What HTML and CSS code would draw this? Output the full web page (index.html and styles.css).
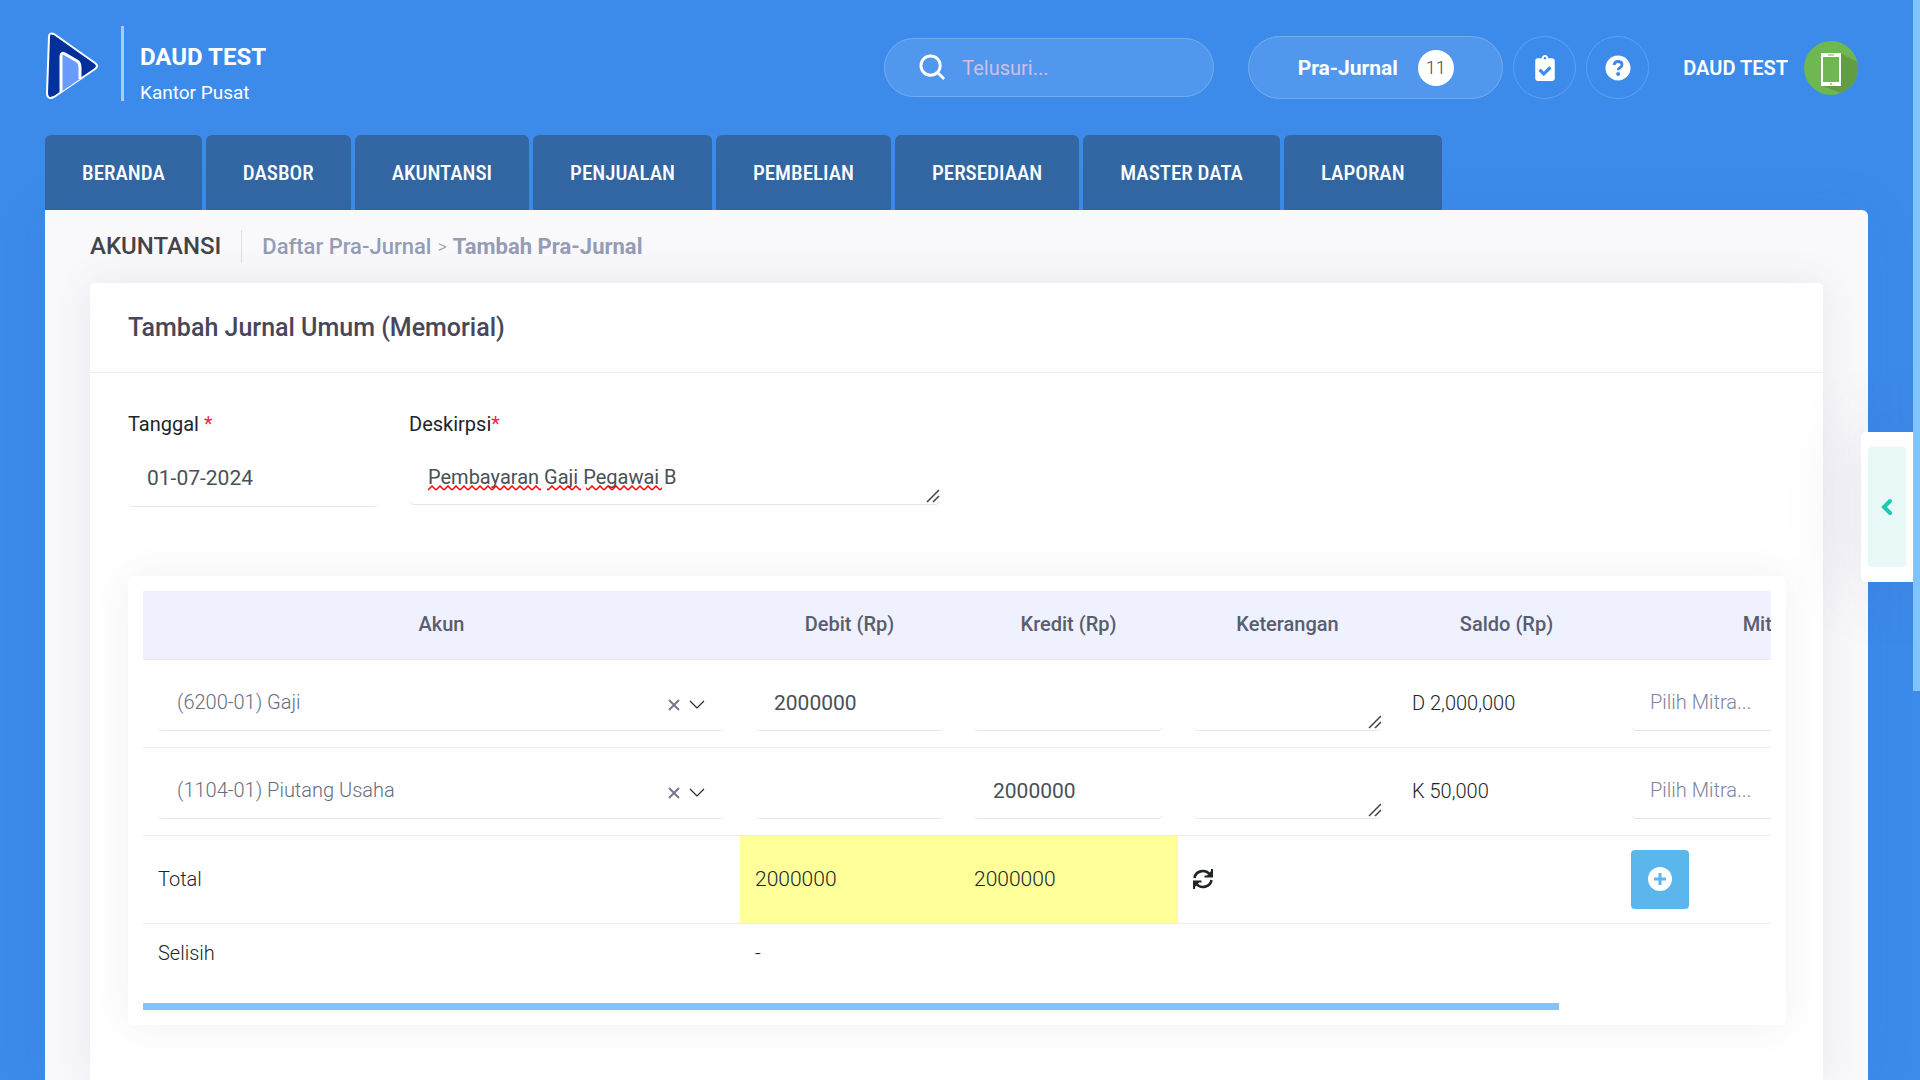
FILE: index.html
```html
<!DOCTYPE html>
<html lang="id">

<head>
    <meta charset="UTF-8">
    <meta name="viewport" content="width=device-width, initial-scale=1.0">
    <title>Tambah Pra-Jurnal</title>
    <link rel="stylesheet" href="styles.css">
</head>

<body>

    <header class="topbar">
        <a class="logo" href="#" aria-label="Beranda">
            <svg width="54" height="68" viewBox="0 0 54 68">
                <path d="M4 5 Q4 0 9 2 L50 31 Q54 34 50 37 L9 65 Q2 68 2 61 Z" fill="#00309b" stroke="#fff" stroke-width="2" stroke-linejoin="round" />
                <path d="M16 60 V24 Q16 20 20 22 L32 29 Q35 31 35 35 V47 Z" fill="#6a9bff" />
                <path d="M16 60 V24 Q16 20 20 22 L32 29 Q35 31 35 35 V47" fill="none" stroke="#fff" stroke-width="3" />
            </svg>
        </a>
        <div class="company">
            <strong>DAUD TEST</strong>
            <span>Kantor Pusat</span>
        </div>

        <form class="search">
            <svg width="27" height="27" viewBox="0 0 28 28" fill="none" stroke="#fff" stroke-width="3">
                <circle cx="12" cy="12" r="10" />
                <path d="M19 19 L26 26" />
            </svg>
            <input type="search" placeholder="Telusuri..." aria-label="Telusuri">
        </form>

        <button class="prejournal" type="button">Pra-Jurnal <span class="badge">11</span></button>

        <button class="round" type="button" aria-label="Tugas">
            <svg width="20" height="26" viewBox="0 0 384 512" fill="#fff">
                <path d="M336 64h-80c0-35.300-28.700-64-64-64s-64 28.700-64 64H48C21.500 64 0 85.500 0 112v352c0 26.500 21.500 48 48 48h288c26.500 0 48-21.500 48-48V112c0-26.500-21.500-48-48-48zM192 40c13.300 0 24 10.700 24 24s-10.700 24-24 24-24-10.700-24-24 10.700-24 24-24zm121 234L176 410c-5 5-12 5-17 0l-88-89c-5-5-5-12 0-17l28-28c5-5 12-5 17 0l52 52 100-100c5-5 12-5 17 0l28 29c5 5 5 12 0 17z" />
            </svg>
        </button>
        <button class="round" type="button" aria-label="Bantuan">
            <svg width="26" height="26" viewBox="0 0 26 26">
                <circle cx="13" cy="13" r="12.500" fill="#fff" />
                <path d="M9 10 Q9.500 6.500 13 6.500 Q17 6.500 17 9.700 Q17 11.500 14.800 12.700 Q13.200 13.600 13.200 15.300" fill="none" stroke="#3c8bea" stroke-width="2.800" />
                <circle cx="13.100" cy="19" r="2" fill="#3c8bea" />
            </svg>
        </button>

        <a class="user" href="#">
            DAUD TEST
            <svg width="54" height="54" viewBox="0 0 54 54">
                <defs>
                    <clipPath id="avatar"><circle cx="27" cy="27" r="27" /></clipPath>
                </defs>
                <circle cx="27" cy="27" r="27" fill="#6fb751" />
                <path d="M36 12 L54 21 V54 H42 L18 45 Z" fill="#629c43" clip-path="url(#avatar)" />
                <path d="M17 12 H37 V45 H17 Z" fill="#fff" />
                <path d="M19 16 H35 V41 H19 Z" fill="#6fb751" />
                <path d="M24 14 H30" stroke="#6fb751" />
                <path d="M27 42 V44" stroke="#629c43" />
            </svg>
        </a>
    </header>

    <nav class="tabs">
        <a href="#">BERANDA</a>
        <a href="#">DASBOR</a>
        <a href="#">AKUNTANSI</a>
        <a href="#">PENJUALAN</a>
        <a href="#">PEMBELIAN</a>
        <a href="#">PERSEDIAAN</a>
        <a href="#">MASTER DATA</a>
        <a href="#">LAPORAN</a>
    </nav>

    <main class="content">
        <div class="subheader">
            <h1>AKUNTANSI</h1>
            <div class="crumbs">
                <a href="#">Daftar Pra-Jurnal</a>
                <span>&gt;</span>
                <a class="current" href="#">Tambah Pra-Jurnal</a>
            </div>
        </div>

        <section class="card">
            <div class="card-head">
                <h2>Tambah Jurnal Umum (Memorial)</h2>
            </div>

            <div class="card-body">
                <div class="fields">
                    <div class="field date">
                        <label for="tanggal">Tanggal <span class="req">*</span></label>
                        <input class="control amount" type="text" id="tanggal" value="01-07-2024">
                    </div>
                    <div class="field desc">
                        <label for="deskripsi">Deskirpsi<span class="req">*</span></label>
                        <textarea class="control" id="deskripsi" rows="1" spellcheck="false">Pembayaran Gaji Pegawai B</textarea>
                        <svg class="squiggle" width="236" height="6">
                            <defs>
                                <pattern id="wave" width="8" height="6" patternUnits="userSpaceOnUse">
                                    <path d="M0 5 L4 1 L8 5" fill="none" stroke="#f00" stroke-width="1.500" />
                                </pattern>
                            </defs>
                            <rect width="113" height="6" fill="url(#wave)" />
                            <rect x="119" width="34" height="6" fill="url(#wave)" />
                            <rect x="158" width="76" height="6" fill="url(#wave)" />
                        </svg>
                    </div>
                </div>

                <div class="table-card">
                    <div class="table-wrap">
                        <table>
                            <colgroup>
                                <col class="col-akun">
                                <col class="col-std">
                                <col class="col-std">
                                <col class="col-std">
                                <col class="col-std">
                                <col class="col-mitra">
                                <col class="col-aksi">
                            </colgroup>
                            <thead>
                                <tr>
                                    <th>Akun</th>
                                    <th>Debit (Rp)</th>
                                    <th>Kredit (Rp)</th>
                                    <th>Keterangan</th>
                                    <th>Saldo (Rp)</th>
                                    <th>Mitra</th>
                                    <th></th>
                                </tr>
                            </thead>
                            <tbody>
                                <tr>
                                    <td>
                                        <div class="picker">
                                            <select class="control" aria-label="Akun">
                                                <option>(6200-01) Gaji</option>
                                            </select>
                                            <button class="clear" type="button" aria-label="Hapus">
                                                <svg width="12" height="12" viewBox="0 0 12 12"><path d="M1 1 L11 11 M11 1 L1 11" /></svg>
                                            </button>
                                            <svg class="arrow" width="16" height="10" viewBox="0 0 16 10"><path d="M1 1 L8 8 L15 1" /></svg>
                                        </div>
                                    </td>
                                    <td><input class="control amount" type="text" value="2000000" aria-label="Debit"></td>
                                    <td><input class="control amount" type="text" aria-label="Kredit"></td>
                                    <td><textarea class="control" rows="1" aria-label="Keterangan"></textarea></td>
                                    <td>D 2,000,000</td>
                                    <td>
                                        <select class="control placeholder" aria-label="Mitra">
                                            <option>Pilih Mitra...</option>
                                        </select>
                                    </td>
                                    <td></td>
                                </tr>
                                <tr>
                                    <td>
                                        <div class="picker">
                                            <select class="control" aria-label="Akun">
                                                <option>(1104-01) Piutang Usaha</option>
                                            </select>
                                            <button class="clear" type="button" aria-label="Hapus">
                                                <svg width="12" height="12" viewBox="0 0 12 12"><path d="M1 1 L11 11 M11 1 L1 11" /></svg>
                                            </button>
                                            <svg class="arrow" width="16" height="10" viewBox="0 0 16 10"><path d="M1 1 L8 8 L15 1" /></svg>
                                        </div>
                                    </td>
                                    <td><input class="control amount" type="text" aria-label="Debit"></td>
                                    <td><input class="control amount" type="text" value="2000000" aria-label="Kredit"></td>
                                    <td><textarea class="control" rows="1" aria-label="Keterangan"></textarea></td>
                                    <td>K 50,000</td>
                                    <td>
                                        <select class="control placeholder" aria-label="Mitra">
                                            <option>Pilih Mitra...</option>
                                        </select>
                                    </td>
                                    <td></td>
                                </tr>
                                <tr>
                                    <td>Total</td>
                                    <td class="sum">2000000</td>
                                    <td class="sum">2000000</td>
                                    <td>
                                        <button class="refresh" type="button" aria-label="Hitung ulang">
                                            <svg width="20" height="20" viewBox="0 0 20 20">
                                                <path d="M1.500 9 A8.500 8 0 0 1 16.500 5 M18.500 11 A8.500 8 0 0 1 3.500 15" fill="none" stroke="#212529" stroke-width="2.600" />
                                                <path d="M20 0 V8.500 H11.500 V6.500 H14 L18 2 V0 Z M0 20 V11.500 H8.500 V13.500 H6 L2 18 V20 Z" fill="#212529" />
                                            </svg>
                                        </button>
                                    </td>
                                    <td></td>
                                    <td>
                                        <button class="add" type="button" aria-label="Tambah baris">
                                            <svg width="24" height="24" viewBox="0 0 24 24">
                                                <circle cx="12" cy="12" r="12" fill="#fff" />
                                                <path d="M12 6 V18 M6 12 H18" stroke="#5ab6eb" stroke-width="3" />
                                            </svg>
                                        </button>
                                    </td>
                                    <td></td>
                                </tr>
                                <tr class="diff">
                                    <td>Selisih</td>
                                    <td>-</td>
                                    <td></td>
                                    <td></td>
                                    <td></td>
                                    <td></td>
                                    <td></td>
                                </tr>
                            </tbody>
                        </table>
                    </div>
                    <div class="scroll-x"></div>
                </div>
            </div>
        </section>
    </main>

    <aside class="drawer">
        <button type="button" aria-label="Buka panel">
            <svg width="12" height="18" viewBox="0 0 12 18"><path d="M9 3 L3 9 L9 15" /></svg>
        </button>
    </aside>
    <div class="scroll-y"></div>

</body>

</html>
```

FILE: styles.css
```css
* {
    margin: 0;
    padding: 0;
    box-sizing: border-box;
}

body {
    display: flex;
    flex-direction: column;
    height: 100vh;
    padding: 0 52px 0 45px;
    overflow: hidden;
    background: #3c8bea;
    color: #212529;
    font-family: Roboto, "Liberation Sans", sans-serif;
    font-size: 20px;
    line-height: 30px;
}

a {
    color: inherit;
    text-decoration: none;
}

button,
input,
select,
textarea {
    font: inherit;
    color: inherit;
    border: 0;
    outline: 0;
    background: none;
}

svg {
    display: block;
    flex: none;
}

/* header */
.topbar {
    display: flex;
    align-items: center;
    height: 135px;
    flex: none;
    color: #fff;
}

.logo {
    margin-bottom: 4px;
}

.company {
    display: flex;
    flex-direction: column;
    justify-content: flex-end;
    gap: 13px;
    height: 75px;
    margin: 0 auto 8px 22px;
    padding-left: 16px;
    border-left: 3px solid #a5cbf8;
}

.company strong {
    font-size: 24px;
    font-weight: 700;
}

.company span {
    font-size: 19px;
    line-height: 16px;
}

.search {
    display: flex;
    align-items: center;
    gap: 16px;
    width: 330px;
    height: 59px;
    margin-right: 34px;
    padding: 0 34px;
    border: 1px solid #75adf1;
    border-radius: 30px;
    background: #5097ed;
}

.search input {
    width: 100%;
}

.search input::placeholder {
    color: #d3bfe0;
}

.prejournal {
    display: flex;
    align-items: center;
    justify-content: center;
    gap: 20px;
    width: 255px;
    height: 63px;
    border: 1px solid #75adf1;
    border-radius: 32px;
    background: #5097ed;
    font-size: 21px;
    font-weight: 700;
}

.badge {
    width: 36px;
    height: 36px;
    border-radius: 50%;
    background: #fff;
    color: #45454d;
    font-size: 18px;
    font-weight: 300;
    line-height: 36px;
}

.round {
    display: flex;
    align-items: center;
    justify-content: center;
    width: 63px;
    height: 63px;
    margin-left: 10px;
    border: 1px solid #629fef;
    border-radius: 50%;
}

.user {
    display: flex;
    align-items: center;
    gap: 16px;
    margin: 0 10px 0 34px;
    font-weight: 600;
}

/* menu */
.tabs {
    display: flex;
    gap: 4px;
    flex: none;
}

.tabs a {
    height: 75px;
    padding: 0 37px;
    border-radius: 6px 6px 0 0;
    background: #3267a3;
    color: #fff;
    font-family: "Roboto Condensed", "Liberation Sans Narrow", "Liberation Sans", sans-serif;
    font-size: 21px;
    font-weight: 500;
    line-height: 76px;
}

/* page */
.content {
    display: flex;
    flex-direction: column;
    flex: 1;
    padding: 0 45px;
    border-radius: 0 6px 0 0;
    background: #f9f9fc;
    box-shadow: 0 0 50px rgba(40, 90, 200, 0.1);
}

.subheader {
    display: flex;
    align-items: center;
    height: 73px;
    flex: none;
}

.subheader h1 {
    padding-right: 20px;
    border-right: 1px solid #dcdde6;
    color: #434349;
    font-size: 24px;
    font-weight: 500;
    line-height: 33px;
}

.crumbs {
    display: flex;
    gap: 6px;
    padding-left: 20px;
    color: #959cb6;
    font-size: 22px;
    font-weight: 500;
}

.crumbs span {
    font-size: 18px;
    font-weight: 300;
}

.crumbs .current {
    font-weight: 700;
}

.card {
    flex: 1;
    border-radius: 5px 5px 0 0;
    background: #fff;
    box-shadow: 0 0 38px rgba(82, 63, 105, 0.1);
}

.card-head {
    padding: 0 38px;
    border-bottom: 1px solid #ebedf2;
}

.card-head h2 {
    color: #48465b;
    font-size: 25px;
    font-weight: 500;
    line-height: 89px;
}

.card-body {
    padding: 36px 37px 36px 38px;
}

.fields {
    display: flex;
    gap: 31px;
    height: 167px;
}

.field {
    position: relative;
}

.field label {
    display: block;
    margin-bottom: 11px;
}

.req {
    color: #fd1f3f;
}

.date {
    width: 250px;
}

.desc {
    width: 531px;
}

.control {
    display: block;
    width: 100%;
    height: 57px;
    padding: 0 19px;
    border-bottom: 1px solid #e2e5ec;
    border-radius: 5px;
    color: #495057;
}

textarea.control {
    height: 55px;
    padding-top: 12px;
    line-height: 30px;
    resize: none;
    background: url("data:image/svg+xml,%3Csvg xmlns='http://www.w3.org/2000/svg' width='14' height='14'%3E%3Cpath d='M1 13L13 1M7 13L13 7' stroke='%23444' stroke-width='1.5'/%3E%3C/svg%3E") no-repeat right bottom 1px;
}

.squiggle {
    position: absolute;
    left: 19px;
    top: 76px;
}

/* journal rows */
.table-card {
    padding: 15px 15px;
    border-radius: 5px;
    background: #fff;
    box-shadow: 0 0 38px rgba(82, 63, 105, 0.08);
}

.table-wrap {
    overflow: hidden;
    height: 412px;
}

table {
    width: 1872px;
    table-layout: fixed;
    border-collapse: collapse;
    font-weight: 300;
}

.col-akun {
    width: 597px;
}

.col-std {
    width: 219px;
}

.col-mitra {
    width: 300px;
}

.col-aksi {
    width: 99px;
}

th {
    height: 68px;
    padding-bottom: 2px;
    border-bottom: 1px solid #e8eaf2;
    background: #eff1ff;
    color: #595d6e;
    font-weight: 500;
}

td {
    height: 88px;
    padding: 0 15px;
    border-bottom: 1px solid #ebedf2;
}

td .control {
    height: 56px;
}

td select.control {
    appearance: none;
    padding-bottom: 2px;
    color: #646c83;
}

td select.placeholder {
    color: #7c82a0;
}

.amount {
    font-size: 21px;
    font-weight: 400;
}

.picker {
    position: relative;
}

.clear {
    position: absolute;
    right: 45px;
    top: 24px;
}

.arrow {
    position: absolute;
    right: 20px;
    top: 25px;
    fill: none;
    stroke: #212529;
    stroke-width: 1.2;
}

.clear path {
    stroke: #74788d;
    stroke-width: 2;
}

.sum {
    background: #ffff99;
    font-size: 21px;
}

.refresh {
    display: block;
}

.add {
    display: flex;
    align-items: center;
    justify-content: center;
    width: 58px;
    height: 59px;
    border-radius: 4px;
    background: #5ab6eb;
}

.diff td {
    height: 60px;
    border: 0;
}

/* scroll bars */
.scroll-x {
    width: 87%;
    height: 7px;
    background: #7fc4ff;
}

.scroll-y {
    position: fixed;
    top: 0;
    right: 0;
    width: 7px;
    height: 64vh;
    background: #7fc4ff;
}

/* side drawer handle */
.drawer {
    position: fixed;
    top: 432px;
    right: 7px;
    width: 52px;
    height: 150px;
    padding: 15px 7px;
    border-radius: 5px 0 0 5px;
    background: #fff;
    box-shadow: 0 0 80px rgba(82, 63, 105, 0.15);
}

.drawer button {
    display: flex;
    align-items: center;
    justify-content: center;
    width: 38px;
    height: 120px;
    border-radius: 4px;
    background: #e8f8f7;
}

.drawer path {
    fill: none;
    stroke: #1dc9b7;
    stroke-width: 4;
    stroke-linecap: round;
}
```
